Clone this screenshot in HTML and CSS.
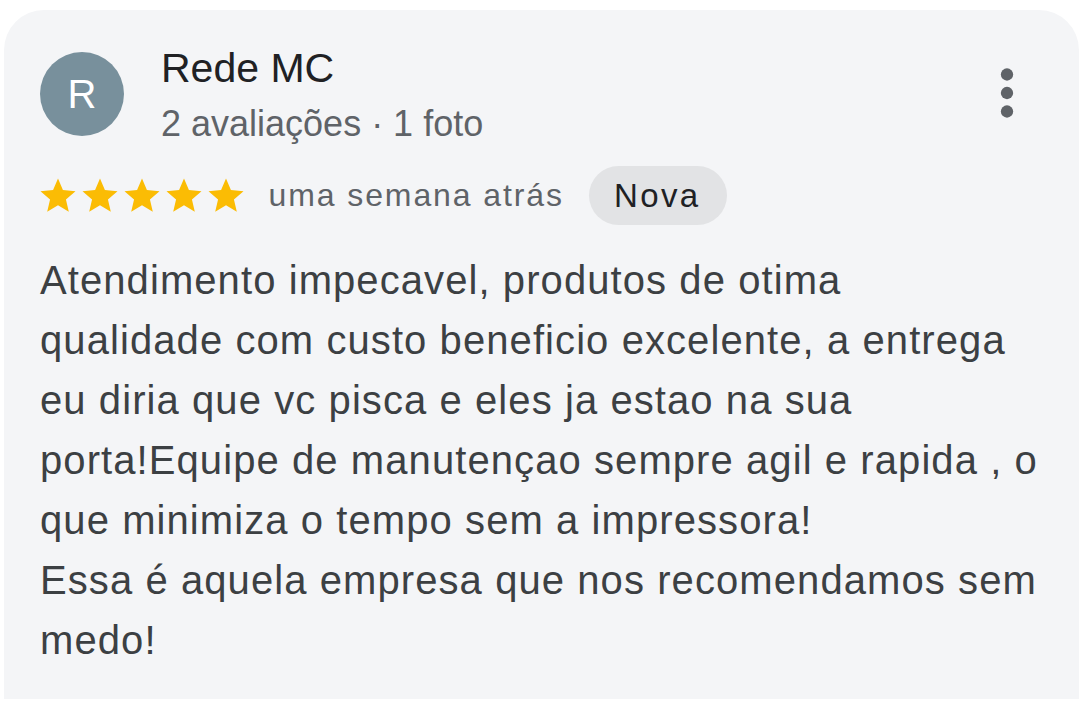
FILE: index.html
```html
<!DOCTYPE html>
<html lang="pt-BR">
<head>
  <meta charset="UTF-8">
  <meta name="viewport" content="width=device-width, initial-scale=1.0">
  <title>Avaliação - Rede MC</title>
  <link rel="stylesheet" href="styles.css">
</head>
<body>

<div class="review">
  <div class="review-head">
    <div class="avatar">R</div>
    <div class="author">
      <div class="author-name">Rede MC</div>
      <div class="author-meta">2 avaliações · 1 foto</div>
    </div>
    <svg class="more" viewBox="0 0 24 24" width="74" height="74" aria-label="Mais opções">
      <circle cx="12" cy="6" r="2"/>
      <circle cx="12" cy="12" r="2"/>
      <circle cx="12" cy="18" r="2"/>
    </svg>
  </div>

  <div class="rating-row">
    <div class="stars">
      <svg viewBox="0 0 24 24" width="42" height="42"><path d="M12 17.27L18.18 21l-1.64-7.03L22 9.24l-7.19-.61L12 2 9.19 8.63 2 9.24l5.46 4.73L5.82 21z"/></svg>
      <svg viewBox="0 0 24 24" width="42" height="42"><path d="M12 17.27L18.18 21l-1.64-7.03L22 9.24l-7.19-.61L12 2 9.19 8.63 2 9.24l5.46 4.73L5.82 21z"/></svg>
      <svg viewBox="0 0 24 24" width="42" height="42"><path d="M12 17.27L18.18 21l-1.64-7.03L22 9.24l-7.19-.61L12 2 9.19 8.63 2 9.24l5.46 4.73L5.82 21z"/></svg>
      <svg viewBox="0 0 24 24" width="42" height="42"><path d="M12 17.27L18.18 21l-1.64-7.03L22 9.24l-7.19-.61L12 2 9.19 8.63 2 9.24l5.46 4.73L5.82 21z"/></svg>
      <svg viewBox="0 0 24 24" width="42" height="42"><path d="M12 17.27L18.18 21l-1.64-7.03L22 9.24l-7.19-.61L12 2 9.19 8.63 2 9.24l5.46 4.73L5.82 21z"/></svg>
    </div>
    <span class="review-date">uma semana atrás</span>
    <span class="chip">Nova</span>
  </div>

  <p class="review-text">Atendimento impecavel, produtos de otima<br>
    qualidade com custo beneficio excelente, a entrega<br>
    eu diria que vc pisca e eles ja estao na sua<br>
    porta!Equipe de manutençao sempre agil e rapida , o<br>
    que minimiza o tempo sem a impressora!<br>
    Essa é aquela empresa que nos recomendamos sem<br>
    medo!</p>
</div>

</body>
</html>
```

FILE: styles.css
```css
body {
  margin: 0;
  padding: 0;
  background: #fff;
  font-family: "Liberation Sans", Arial, sans-serif;
}
.review {
  margin: 10px 12px 0 4px;
  height: 689px;
  box-sizing: border-box;
  padding: 34px 32px 0 36px;
  background: #f4f5f7;
  border-radius: 40px 40px 0 0;
}
.review-head {
  display: flex;
  align-items: flex-start;
}
.avatar {
  width: 84px;
  height: 84px;
  margin-top: 8px;
  border-radius: 50%;
  background: #78909c;
  color: #fff;
  font-size: 40px;
  display: flex;
  align-items: center;
  justify-content: center;
}
.author {
  margin-left: 37px;
}
.author-name {
  font-size: 41px;
  line-height: 48px;
  color: #202124;
}
.author-meta {
  margin-top: 8px;
  font-size: 36px;
  line-height: 48px;
  color: #5f6368;
}
.more {
  margin: 12px 3px 0 auto;
  fill: #5f6368;
}
.rating-row {
  display: flex;
  align-items: center;
  margin-top: 18px;
}
.stars {
  display: flex;
  margin-left: -3.5px;
  fill: #fbbc04;
}
.review-date {
  margin-left: 22px;
  font-size: 32px;
  letter-spacing: 1.9px;
  color: #5f6368;
}
.chip {
  margin-left: 25px;
  height: 59px;
  padding: 0 26px 0 25px;
  border-radius: 30px;
  background: #e2e3e5;
  color: #202124;
  font-size: 33px;
  letter-spacing: 2.4px;
  display: flex;
  align-items: center;
}
.review-text {
  margin: 25px 0 0;
  font-size: 40px;
  line-height: 60px;
  letter-spacing: 1.08px;
  white-space: nowrap;
  color: #3c4043;
}
```
